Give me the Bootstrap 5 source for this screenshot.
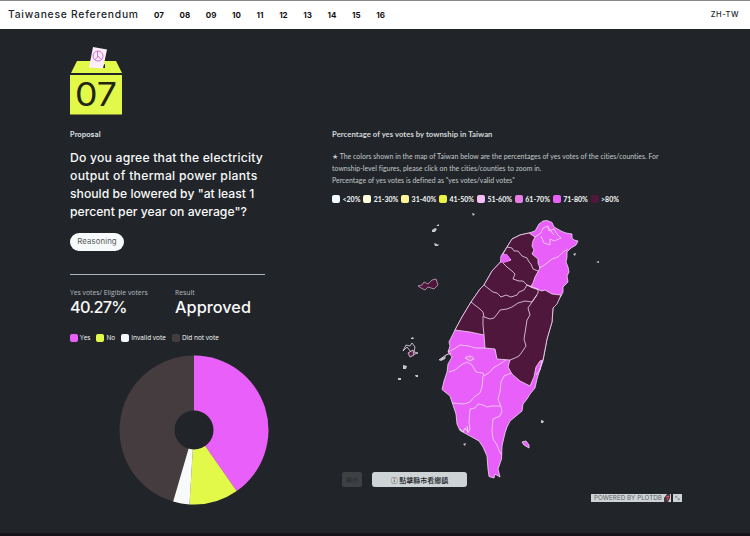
<!DOCTYPE html>
<html lang="en">
<head>
<meta charset="utf-8">
<meta name="viewport" content="width=device-width, initial-scale=1">
<title>Taiwanese Referendum</title>
<link href="https://cdn.jsdelivr.net/npm/bootstrap@5.3.0/dist/css/bootstrap.min.css" rel="stylesheet">
<style>
body{background:#212529;color:#f8f9fa;font-family:Inter,"Noto Sans CJK TC",sans-serif;height:536px;overflow:hidden;border-bottom:3px solid #171419}
.topbar{height:29px;border-top:1px solid #8c8788;color:#212529;padding:0 11px 0 8px}
.brand-name{font-size:10.3px;font-weight:500;letter-spacing:.77px;width:146px}
.topbar .nav-link{font-size:8px;font-weight:700;padding:0;color:#111}
.page-links{width:231px}
.lang{font-size:7.5px;font-weight:500;letter-spacing:.5px}
main{padding:17px 0 0 70px}
.left-col{width:262px}
.right-col{width:350px;padding-top:83px;font-family:Lato,sans-serif}
.ballot{width:54px;height:69px;display:block}
.label-sm{font-size:7.2px;line-height:10px;font-weight:600;margin-top:15px;color:#dee2e6}
.question{font-size:12.2px;line-height:18px;font-weight:500;margin-top:9px;white-space:nowrap}
.question span{display:block}
.question span:nth-child(1){letter-spacing:.2px}
.question span:nth-child(2){letter-spacing:.28px}
.reason{width:54px;height:18px;font-size:7.8px;letter-spacing:.1px;background:#f8f9fa;color:#555b60;margin-top:12px}
.rule{width:195px;height:1px;background:#adb5bd;margin-top:23px}
.figures{margin-top:13px}
.figures>div{width:105px}
.figures small{display:block;font:6.8px/9px "Open Sans",sans-serif;color:#b7bcc0;white-space:nowrap}
.figures strong{display:block;font-size:16.3px;line-height:20px;font-weight:500;white-space:nowrap;letter-spacing:.02px}
.figures div:first-child strong{letter-spacing:-.75px}
.legend-row{font:500 6.5px/8px "Open Sans",sans-serif;white-space:nowrap;margin-top:17px;gap:6px}
.swatch{width:8px;height:8px;border-radius:2px;margin-right:2px;flex:none}
.pie{width:150px;height:150px;margin:13px 0 0 48.500px;display:block}
.map-title{font-size:7.7px;line-height:10px;font-weight:700;color:#d3d7da;letter-spacing:.06px}
.note{font-size:6.9px;line-height:12px;color:#c3c8cb;margin-top:11px;white-space:nowrap;letter-spacing:.04px}
.note span{display:block}
.map-legend{font:700 7px/8px Lato,sans-serif;margin-top:9px;width:287px}
.map-legend .swatch{margin-right:2.5px}
.map-wrap{height:276px;margin-top:6px}
.taiwan{display:block;width:220px;height:270px;margin-left:58px}
.map-buttons{gap:10px;margin:-13px 0 0 10px;position:relative}
.back{width:20px;height:15px;background:#3d4144;color:#222;font-size:6px;border-radius:2px;padding:0}
.hint{width:95px;height:15px;background:#ced3d6;color:#16191b;font:500 7px "Noto Sans CJK TC",sans-serif;border-radius:3px;padding:0}
.credit{margin:7px 0 0 259px;gap:2px;font:6.3px/8px Inter,sans-serif;color:#5d6265}
.credit>span{background:#ced3d6;height:8px;white-space:nowrap}
.credit .powered{width:80px;padding-left:3px}
</style>
</head>
<body>
<header class="topbar bg-white d-flex align-items-center">
  <div class="brand-name text-nowrap">Taiwanese Referendum</div>
  <nav class="page-links d-flex justify-content-between">
    <a class="nav-link" href="#">07</a><a class="nav-link" href="#">08</a><a class="nav-link" href="#">09</a><a class="nav-link" href="#">10</a><a class="nav-link" href="#">11</a><a class="nav-link" href="#">12</a><a class="nav-link" href="#">13</a><a class="nav-link" href="#">14</a><a class="nav-link" href="#">15</a><a class="nav-link" href="#">16</a>
  </nav>
  <div class="lang ms-auto">ZH-TW</div>
</header>
<main class="d-flex align-items-start">
  <section class="left-col">
    <svg class="ballot" viewBox="70 46 54 69">
      <path d="M77 61h39l6 12H71z" fill="#e3f94a"/>
      <path d="M70 75h52v39.500H70z" fill="#e3f94a"/>
      <path d="M103 65l2-1v4h-2z" fill="#212529"/>
      <path d="M93 47l14 2.500-4 19-14-1z" fill="#fceffb"/>
      <g fill="none" stroke="#dc68cf" stroke-width="1"><circle cx="98" cy="56" r="5"/><path d="M97.500 51v6l-3 3M97.800 56l3.500 3.500"/></g>
      <text x="96" y="106.300" text-anchor="middle" font-family="Inter,sans-serif" font-size="32" textLength="42" lengthAdjust="spacingAndGlyphs" fill="#212512" font-weight="400">07</text>
    </svg>
    <div class="label-sm">Proposal</div>
    <div class="question"><span>Do you agree that the electricity</span><span>output of thermal power plants</span><span>should be lowered by "at least 1</span><span>percent per year on average"?</span></div>
    <button class="btn reason rounded-pill border-0 p-0 d-flex align-items-center justify-content-center">Reasoning</button>
    <div class="rule"></div>
    <div class="figures d-flex">
      <div><small>Yes votes/ Eligible voters</small><strong>40.27%</strong></div>
      <div><small>Result</small><strong>Approved</strong></div>
    </div>
    <div class="legend-row d-flex">
      <div class="d-flex"><i class="swatch" style="background:#e95ffa"></i>Yes</div>
      <div class="d-flex"><i class="swatch" style="background:#e3f94a"></i>No</div>
      <div class="d-flex"><i class="swatch" style="background:#f8f9fa"></i>Invalid vote</div>
      <div class="d-flex"><i class="swatch" style="background:#443c3e"></i>Did not vote</div>
    </div>
    <svg class="pie" viewBox="-75 -75 150 150">
      <circle r="74.500" fill="#443c3e"/>
      <path d="M0 0V-74.500A74.500 74.500 0 0 1 42.700 61z" fill="#e95ffa"/>
      <path d="M0 0L42.700 61A74.500 74.500 0 0 1-4.500 74.400z" fill="#e3f94a"/>
      <path d="M0 0L-4.500 74.400A74.500 74.500 0 0 1-20.800 71.500z" fill="#f8f9fa"/>
      <circle r="19.500" fill="#212529"/>
    </svg>
  </section>
  <section class="right-col">
    <div class="map-title">Percentage of yes votes by township in Taiwan</div>
    <div class="note"><span>★ The colors shown in the map of Taiwan below are the percentages of yes votes of the cities/counties. For</span><span>township-level figures, please click on the cities/counties to zoom in.</span><span>Percentage of yes votes is defined as "yes votes/valid votes"</span></div>
    <div class="map-legend d-flex justify-content-between">
      <div class="d-flex"><i class="swatch" style="background:#f2fbff"></i>&lt;20%</div>
      <div class="d-flex"><i class="swatch" style="background:#fbffdc"></i>21-30%</div>
      <div class="d-flex"><i class="swatch" style="background:#fbf495"></i>31-40%</div>
      <div class="d-flex"><i class="swatch" style="background:#ecf344"></i>41-50%</div>
      <div class="d-flex"><i class="swatch" style="background:#f3bff5"></i>51-60%</div>
      <div class="d-flex"><i class="swatch" style="background:#e77ce4"></i>61-70%</div>
      <div class="d-flex"><i class="swatch" style="background:#e95ffa"></i>71-80%</div>
      <div class="d-flex"><i class="swatch" style="background:#4e173b"></i>&gt;80%</div>
    </div>
    <div class="map-wrap">
    <svg class="taiwan" viewBox="390 210 220 270">
      <g stroke="#f3d9f3" stroke-width=".8" stroke-linejoin="round">
        <path fill="#e95ffa" d="M547 221.500L552 223.500 554 228 562 232.500 566 234 572 235 572 239 574 241 578 242 576 246 571 249 567 253 567 258 566 263 568 268 569 273 567 277 568 283 563 288 563 293 561 297 556 305 553 309 552 323 547 340 543 362 540 370 537 380 535 389 530 395 527 400 523 405 522 412 516 417 510 422 507 428 505 434 502 447 501.500 460 498 470 500 478 495 475 494 479 489 477.500 488 470 487 457 483 448 479 442 470 437 460 431.500 457 425 456 415 452 403 450 397 442 390.500 444 382 447 373 448 365 452 358 448 353 450 347 449 343 455 331 462 318 471 303 480 290 484 286 492 272 500.500 263 501 257 507 248 512 240 520 236 529 234 535 232 539 225 543 222z"/>
        <path fill="#4e173b" d="M529 234L535 238 533 242 532 247 534 251 532 255 538 260 538 264 540 269 535 278 533 284 530.500 288 536 290 542 292 545 291 552 295 561 296 557 305 553 309 552 323 547 340 543 361 540 362 536 368 534 378 530 387 520 382 512 375 508 368 510 361 497 360 495 350 485 349 484 336 470 333 455 331 462 318 471 303 480 290 484 286 492 272 500.500 263 504 263 508 262 511 261 507 256 503 255 507 248 512 240 520 236z"/>
        <path fill="none" d="M507 248L512 249 514 252 518 252 522 257 527 259 529 263 531 265 533 270 538 272M503 264L507 268 512 272 515 275 513 280 519 282 523 282 527 286 531 288M484 286L489 290 493 293 497 294 501 298 506 296 511 298 517 296 519 293 524 291 527 286M527 286L538 290 538 294 534 300 532 303M471 303L476 307 480 310 483 313 484 318 490 320 494 319 498 314 500 311 507 310 512 308 518 304 525 302 532 303 537 296M532 303L528 309 530 316 527 321 525 334 524 340 526 347 522 353 519 357 515 359 510 361M483 317L483 326 484 336 M448 353L454 350 460 346 469 347 475 349 485 349 M449 373L455 371 461 366 467 363 472 366 476 373 483 374 484 377 490 373 493 369 500 365 506 361M483 377L482 388 480 394 474 398 470 403 464 405 452 404M511 374L504 377 501 383 500 393 498 400 500 405 502 412 500 417 493 420 492 431 493 440 497 446 500 454 502 455M500 407L492 407 487 408 483 406 478 405 475 409 470 410 469 423 470 430 468 434M539 269L543 267 547 264 552 260 558 258 563 253 568 250M535 238L541 234 543 229 548 227 549 232 554 230 557 235 561 239 554 242 550 240 550 246 544 244 541 237M547 227L554 236"/>
        <path fill="#e77ce4" d="M465 359c3-3 8-2 9 1l-4 2z"/>
        <path fill="#e95ffa" stroke="none" d="M502 256L507 255 510 260 508 263 501 264z"/>
        <path fill="#4e173b" stroke="#c9a3bd" d="M418 287l4-1 2-3 4 2 4-4 4-1 2 6-4 4-6-2-3 3-4-2z"/>
        <path fill="none" d="M403 352l3-6 4 1 2-3 3 4-1 5 4 1-6 2-1-3-4-5z"/>
        <path fill="#5c2449" d="M408 354l5-3 1 5-4 2z"/>
        <path fill="#e95ffa" d="M522 443l4-1 3 4v3l-5-3z"/>
      </g>
      <g fill="#c9c8cc"><path d="M432 231l3-2 2 1-2 3h-3zM436 227l3-2v2zM434 244l3 1 1 2h-3zM437 247l1-2 1 1zM411 339l2-1 1 2h-3zM403 366l4 1-1 3h-3zM398 379h3v2h-3zM415 376h3v2h-2zM573 255l3-1-1 3zM596 263l3-1v2zM541 421l3 1-1 2h-2zM463 445l3-1-1 3zM472 214l3 1-2 2zM439 361l7-4-1 3-4 2z"/></g>
      <path d="M439 361l7-5 5-2M460 430l3 3 2-4 3 4-1-6M542 362l-2 9-4 5" fill="none" stroke="#f3d9f3"/>
    </svg>
    </div>
    <div class="map-buttons d-flex">
      <button class="btn border-0 back">縮小</button>
      <button class="btn border-0 hint">ⓘ 點擊縣市看鄉鎮</button>
    </div>
    <div class="credit d-flex"><span class="powered d-flex align-items-center">POWERED BY PLOTDB
      <svg class="ms-auto" width="8" height="8" viewBox="0 0 8 8"><path d="M1 8V4l3-4h3v4L5 8z" fill="#48343c"/><path d="M3 3l3-1-2 4" stroke="#e5526e" fill="none"/></svg></span>
      <span><svg class="d-block" width="9" height="8" viewBox="0 0 10 8"><path d="M3 2h2M3 2v2M3 2l4 4M7 6V4M7 6H5" stroke="#777" stroke-width=".7"/></svg></span></div>
  </section>
</main>
<script src="https://cdn.jsdelivr.net/npm/bootstrap@5.3.0/dist/js/bootstrap.bundle.min.js"></script>
</body>
</html>
